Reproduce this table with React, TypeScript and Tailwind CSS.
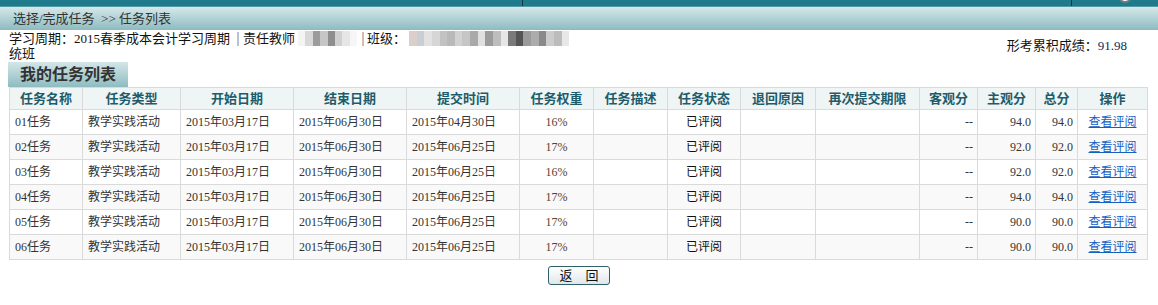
import React from "react";

const rows = [
  { name: "01任务", submit: "2015年04月30日", weight: "16%", sub: "94.0", total: "94.0" },
  { name: "02任务", submit: "2015年06月25日", weight: "17%", sub: "92.0", total: "92.0" },
  { name: "03任务", submit: "2015年06月25日", weight: "16%", sub: "92.0", total: "92.0" },
  { name: "04任务", submit: "2015年06月25日", weight: "17%", sub: "94.0", total: "94.0" },
  { name: "05任务", submit: "2015年06月25日", weight: "17%", sub: "90.0", total: "90.0" },
  { name: "06任务", submit: "2015年06月25日", weight: "17%", sub: "90.0", total: "90.0" },
];

const headers = [
  "任务名称", "任务类型", "开始日期", "结束日期", "提交时间", "任务权重", "任务描述",
  "任务状态", "退回原因", "再次提交期限", "客观分", "主观分", "总分", "操作",
];
const widths = [73, 98, 113, 113, 113, 74, 74, 73, 75, 104, 58, 58, 42, 70];

const teacherBlur = ["#f4f4f4", "#d8d8d8", "#9c9c9c", "#c6c6c6", "#8e8e8e", "#d0d0d0", "#e6e6e6", "#f6f6f6"];
const classBlur = [
  "#dccfca", "#c9cdd6", "#e2e2e2", "#d6d6d6", "#c2c2c2", "#b9b9b9", "#d2d2d2", "#c6c6c6",
  "#a9a9a9", "#e0e0e0", "#9c9c9c", "#bdbdbd", "#e6e6e6", "#7a7a7a", "#555555", "#9a9a9a",
  "#acacac", "#8a8a8a", "#cccccc", "#bcbcbc", "#e8e8e8",
];

function Mosaic({ colors, w }: { colors: string[]; w: number }) {
  return (
    <span className="inline-flex h-[15px] align-middle" style={{ width: w }}>
      {colors.map((c, i) => (
        <span key={i} className="h-full flex-1" style={{ background: c }} />
      ))}
    </span>
  );
}

function Sep() {
  return <span className="inline-block h-[14px] w-[2px] bg-gradient-to-r from-[#f2b58f] to-[#9cc3ea] align-middle" />;
}

export default function App() {
  const font = "font-['Liberation_Serif','Noto_Sans_CJK_SC',serif]";
  return (
    <div className={`w-[1158px] h-[305px] bg-white ${font} text-[12px] text-[#333]`}>
      {/* top bar */}
      <div className="flex h-[6px] overflow-hidden bg-[#1f7a8b]">
        <div className="w-[522px]" />
        <div className="w-[1px] bg-[#0e3a43]" />
        <div className="w-[548px]" />
        <div className="w-[1px] bg-[#0e3a43]" />
        <div className="flex-1 pl-[46px]">
          <div className="-mt-[11px] h-[14px] w-[14px] rounded-full border-2 border-[#6d7f86] bg-white" />
        </div>
      </div>
      <div className="h-[1px] bg-[#4f9aa5]" />
      <div className="flex h-[23px] items-center bg-gradient-to-b from-[#d6e8ea] to-[#8dbbc0] pl-[13px] text-[13px] text-[#333]">
        选择/完成任务&nbsp; &gt;&gt; 任务列表
      </div>

      {/* info */}
      <div className="flex h-[32px] items-center justify-between pl-[9px] pr-[31px] text-[13px]">
        <div className="leading-[15px] text-[#111]">
          <div className="flex items-center whitespace-nowrap">
            <span>学习周期：2015春季成本会计学习周期</span>
            <span className="w-[7px]" />
            <Sep />
            <span className="w-[4px]" />
            <span>责任教师</span>
            <span className="w-[3px]" />
            <Mosaic colors={teacherBlur} w={59} />
            <span className="w-[5px]" />
            <Sep />
            <span className="w-[3px]" />
            <span>班级：</span>
            <span className="w-[3px]" />
            <Mosaic colors={classBlur} w={160} />
          </div>
          <div>统班</div>
        </div>
        <div className="text-[#111]">
          形考累积成绩：<span className="text-[#1a2a55]">91.98</span>
        </div>
      </div>

      {/* tab */}
      <div className="pl-[8px]">
        <div className="flex h-[25px] w-[120px] items-center justify-center bg-gradient-to-b from-[#d3e6e8] to-[#8ebcc1] text-[16px] font-bold text-[#333]">
          我的任务列表
        </div>
      </div>

      {/* table */}
      <div className="pl-[9px]">
        <table className="w-[1138px] table-fixed border-collapse">
          <colgroup>
            {widths.map((w, i) => (
              <col key={i} style={{ width: w }} />
            ))}
          </colgroup>
          <thead>
            <tr className="h-[22px] bg-[#eff5f5]">
              {headers.map((h) => (
                <th key={h} className="border border-[#dadada] p-0 text-center text-[13px] font-bold text-[#1d5c6b]">
                  {h}
                </th>
              ))}
            </tr>
          </thead>
          <tbody>
            {rows.map((r, i) => (
              <tr key={r.name} className={`h-[25px] ${i % 2 === 1 ? "bg-[#f9f9f9]" : "bg-white"}`}>
                <td className="border border-[#dadada] pl-[5px] text-left">{r.name}</td>
                <td className="border border-[#dadada] pl-[5px] text-left">教学实践活动</td>
                <td className="border border-[#dadada] pl-[5px] text-left">2015年03月17日</td>
                <td className="border border-[#dadada] pl-[5px] text-left">2015年06月30日</td>
                <td className="border border-[#dadada] pl-[5px] text-left">{r.submit}</td>
                <td className="border border-[#dadada] text-center text-[#5a4030]">{r.weight}</td>
                <td className="border border-[#dadada]"></td>
                <td className="border border-[#dadada] text-center text-[#111]">已评阅</td>
                <td className="border border-[#dadada]"></td>
                <td className="border border-[#dadada]"></td>
                <td className="border border-[#dadada] pr-[4px] text-right">--</td>
                <td className="border border-[#dadada] pr-[4px] text-right">{r.sub}</td>
                <td className="border border-[#dadada] pr-[4px] text-right">{r.total}</td>
                <td className="border border-[#dadada] text-center">
                  <a href="#" className="text-[#1560c4] underline">查看评阅</a>
                </td>
              </tr>
            ))}
          </tbody>
        </table>
      </div>

      {/* button */}
      <div className="flex justify-center pt-[6px]">
        <button className="flex h-[19px] w-[62px] items-center justify-center rounded-[3px] border border-[#2f5f6a] bg-gradient-to-b from-white to-[#dfe7ea] text-[13px] leading-none text-[#111]">
          返&nbsp;&nbsp;&nbsp;&nbsp;回
        </button>
      </div>
    </div>
  );
}
